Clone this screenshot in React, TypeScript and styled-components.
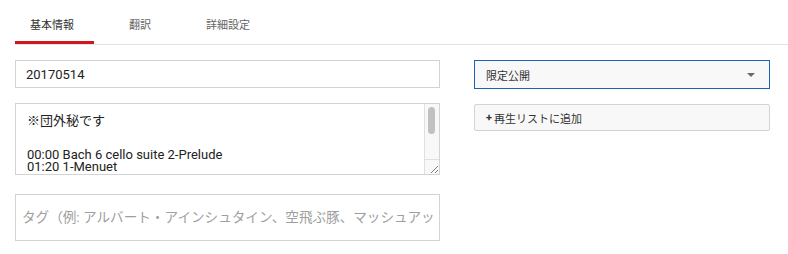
import React from "react";
import styled, { createGlobalStyle } from "styled-components";

const GlobalStyle = createGlobalStyle`
  html, body {
    margin: 0;
    padding: 0;
    background: #ffffff;
  }
  body {
    font-family: Roboto, "Noto Sans CJK JP", sans-serif;
    color: #333333;
  }
  * { box-sizing: border-box; }
`;

const Page = styled.div`
  width: 788px;
  height: 254px;
  overflow: hidden;
  background: #fff;
`;

const TabBar = styled.div`
  display: flex;
  gap: 20px;
  margin-left: 15px;
  height: 45px;
  border-bottom: 1px solid #e2e2e2;
`;

const Tab = styled.div<{ $active?: boolean }>`
  display: flex;
  align-items: flex-end;
  height: 44px;
  padding: 0 20px 8px 15px;
  border-bottom: 3px solid ${(p) => (p.$active ? "#cc181e" : "transparent")};
  font-size: 11px;
  line-height: 14px;
  color: ${(p) => (p.$active ? "#333333" : "#666666")};
  cursor: pointer;
`;

const Body = styled.div`
  display: flex;
  gap: 34px;
  padding: 15px 18px 0 15px;
`;

const LeftColumn = styled.div`
  width: 425px;
  display: flex;
  flex-direction: column;
`;

const RightColumn = styled.div`
  width: 296px;
  display: flex;
  flex-direction: column;
  gap: 15px;
`;

const TextInput = styled.input<{ $height: number; $padX: number; $phSize?: number }>`
  display: block;
  width: 100%;
  height: ${(p) => p.$height}px;
  padding: 0 ${(p) => p.$padX}px;
  border: 1px solid #d3d3d3;
  border-radius: 0;
  outline: none;
  background: #fff;
  font-family: Roboto, "Noto Sans CJK JP", sans-serif;
  font-size: 13px;
  color: #222;
  &::placeholder {
    color: #9e9e9e;
    font-size: ${(p) => p.$phSize ?? 13}px;
  }
`;

const DescriptionBox = styled.div`
  position: relative;
  margin-top: 15px;
  width: 100%;
  height: 72px;
  border: 1px solid #d3d3d3;
  overflow: hidden;
  background: #fff;
`;

const DescContent = styled.div`
  padding: 8px 26px 6px 11px;
  font-size: 13px;
  color: #222;
  white-space: pre;
  outline: none;
`;

const DescLine = styled.div<{ $h: number }>`
  height: ${(p) => p.$h}px;
  line-height: ${(p) => p.$h}px;
`;

const ScrollTrack = styled.div`
  position: absolute;
  top: 0;
  right: 0;
  bottom: 15px;
  width: 15px;
  background: #f8f8f8;
  border-left: 1px solid #e0e0e0;
`;

const ScrollThumb = styled.div`
  position: absolute;
  top: 3px;
  left: 3px;
  width: 7px;
  height: 27px;
  border-radius: 4px;
  background: #c1c1c1;
`;

const ResizeCorner = styled.div`
  position: absolute;
  right: 0;
  bottom: 0;
  width: 15px;
  height: 15px;
  background: #f8f8f8;
  border-left: 1px solid #e0e0e0;
  border-top: 1px solid #e0e0e0;
  svg {
    display: block;
  }
`;

const TagsInput = styled(TextInput)`
  margin-top: 19px;
`;

const SelectBox = styled.div`
  display: flex;
  align-items: center;
  justify-content: space-between;
  height: 29px;
  padding: 0 11px 0 11px;
  border: 1px solid #1c62b9;
  background: #f8f8f8;
  font-size: 11px;
  color: #333;
  cursor: pointer;
`;

const Arrow = styled.span`
  width: 0;
  height: 0;
  border-left: 4px solid transparent;
  border-right: 4px solid transparent;
  border-top: 4px solid #6a6a6a;
  margin-right: 3px;
`;

const PlaylistButton = styled.button`
  display: flex;
  align-items: center;
  height: 27px;
  padding: 0 11px;
  border: 1px solid #d3d3d3;
  border-radius: 2px;
  background: #f8f8f8;
  font-family: Roboto, "Noto Sans CJK JP", sans-serif;
  font-size: 11px;
  color: #333;
  cursor: pointer;
`;

const Plus = styled.span`
  font-weight: bold;
  margin-right: 2px;
`;

const descLines: { text: string; h: number }[] = [
  { text: "※団外秘です", h: 17 },
  { text: "", h: 19.7 },
  { text: "00:00 Bach 6 cello suite 2-Prelude", h: 12.7 },
  { text: "01:20 1-Menuet", h: 12.7 },
];

export default function App() {
  return (
    <Page>
      <GlobalStyle />
      <TabBar>
        <Tab $active>基本情報</Tab>
        <Tab>翻訳</Tab>
        <Tab>詳細設定</Tab>
      </TabBar>
      <Body>
        <LeftColumn>
          <TextInput $height={28} $padX={10} defaultValue="20170514" />
          <DescriptionBox>
            <DescContent contentEditable suppressContentEditableWarning>
              {descLines.map((l, i) => (
                <DescLine key={i} $h={l.h}>
                  {l.text}
                </DescLine>
              ))}
            </DescContent>
            <ScrollTrack>
              <ScrollThumb />
            </ScrollTrack>
            <ResizeCorner>
              <svg width="14" height="14" viewBox="0 0 14 14">
                <line x1="6" y1="13" x2="13" y2="6" stroke="#808080" strokeWidth="1" />
                <line x1="10" y1="13" x2="13" y2="10" stroke="#808080" strokeWidth="1" />
              </svg>
            </ResizeCorner>
          </DescriptionBox>
          <TagsInput
            $height={47}
            $padX={6}
            $phSize={13.6}
            placeholder="タグ（例: アルバート・アインシュタイン、空飛ぶ豚、マッシュアップ）"
          />
        </LeftColumn>
        <RightColumn>
          <SelectBox>
            <span>限定公開</span>
            <Arrow />
          </SelectBox>
          <PlaylistButton>
            <Plus>+</Plus>再生リストに追加
          </PlaylistButton>
        </RightColumn>
      </Body>
    </Page>
  );
}
